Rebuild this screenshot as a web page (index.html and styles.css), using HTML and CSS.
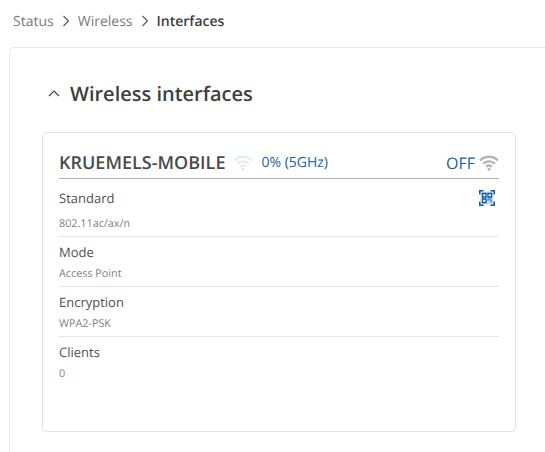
FILE: index.html
```html
<!DOCTYPE html>
<html lang="en">
<head>
    <meta charset="UTF-8">
    <meta name="viewport" content="width=device-width, initial-scale=1.0">
    <title>Wireless Interfaces</title>
    <link rel="stylesheet" href="styles.css">
</head>
<body>

    <!-- Breadcrumb -->
    <nav class="breadcrumb">
        <span class="crumb">Status</span>
        <svg class="crumb-sep" viewBox="0 0 8 12"><path d="M1.5 1 L6.5 6 L1.5 11"/></svg>
        <span class="crumb">Wireless</span>
        <svg class="crumb-sep" viewBox="0 0 8 12"><path d="M1.5 1 L6.5 6 L1.5 11"/></svg>
        <span class="crumb current">Interfaces</span>
    </nav>

    <!-- Main panel -->
    <section class="panel">
        <div class="panel-title">
            <svg class="collapse-icon" viewBox="0 0 12 7"><path d="M1 6 L6 1 L11 6"/></svg>
            <h2>Wireless interfaces</h2>
        </div>

        <div class="card">
            <div class="card-head">
                <span class="ssid">KRUEMELS-MOBILE</span>
                <svg class="wifi wifi-signal" viewBox="0 0 20 16">
                    <path d="M1 5.5 C6 0.5 14 0.5 19 5.5"/>
                    <path d="M4.2 8.7 C7.5 5.6 12.5 5.6 15.8 8.7"/>
                    <path d="M7.2 11.6 C8.9 10.2 11.1 10.2 12.8 11.6"/>
                    <circle cx="10" cy="14.2" r="1.5"/>
                </svg>
                <span class="signal">0% (5GHz)</span>
                <span class="state">OFF</span>
                <svg class="wifi wifi-state" viewBox="0 0 20 16">
                    <path d="M1 5.5 C6 0.5 14 0.5 19 5.5"/>
                    <path d="M4.2 8.7 C7.5 5.6 12.5 5.6 15.8 8.7"/>
                    <path d="M7.2 11.6 C8.9 10.2 11.1 10.2 12.8 11.6"/>
                    <circle cx="10" cy="14.2" r="1.5"/>
                </svg>
            </div>

            <div class="row row-first">
                <div>
                    <div class="label">Standard</div>
                    <div class="value value-gap">802.11ac/ax/n</div>
                </div>
                <svg class="qr" viewBox="0 0 16 16">
                    <rect class="qr-back" x="1.5" y="1.5" width="13" height="13"/>
                    <path class="qr-frame" d="M0.75 4.5 V0.75 H4.5 M11.5 0.75 H15.25 V4.5 M15.25 11.5 V15.25 H11.5 M4.5 15.25 H0.75 V11.5"/>
                    <path class="qr-cells" d="M3.5 3.5 H7 V7 H3.5 Z M9 3.5 H12.5 V7 H9 Z M3.5 9 H7 V12.5 H3.5 Z"/>
                    <path class="qr-bits" d="M9 9 H12.5 M9 9 V11 M11 11 H12.5 V12.5"/>
                </svg>
            </div>
            <div class="row">
                <div>
                    <div class="label">Mode</div>
                    <div class="value">Access Point</div>
                </div>
            </div>
            <div class="row">
                <div>
                    <div class="label">Encryption</div>
                    <div class="value">WPA2-PSK</div>
                </div>
            </div>
            <div class="row row-last">
                <div>
                    <div class="label">Clients</div>
                    <div class="value">0</div>
                </div>
            </div>
        </div>
    </section>

</body>
</html>
```

FILE: styles.css
```css
/* Reset */
* {
    margin: 0;
    padding: 0;
    box-sizing: border-box;
}

body {
    font-family: "Open Sans", "Liberation Sans", sans-serif;
    text-rendering: geometricPrecision;
    background-color: #fff;
    color: #404040;
    height: 452px;
    overflow: hidden;
}

/* Breadcrumb */
.breadcrumb {
    display: flex;
    align-items: center;
    height: 42px;
    padding-left: 13px;
    font-size: 14px;
    color: #7a7a7a;
}

.crumb-sep {
    width: 8px;
    height: 12px;
    margin: 0 7.5px 0 8.5px;
    fill: none;
    stroke: #555;
    stroke-width: 1.1;
}

.current {
    font-weight: 600;
    color: #404040;
}

/* Panel */
.panel {
    margin: 5px 0 0 9px;
    height: 405px;
    padding-left: 32px;
    border: 1.5px solid #e6e8ee;
    border-right: none;
    border-bottom: none;
    border-top-left-radius: 5px;
}

.panel-title {
    display: flex;
    align-items: center;
    height: 84px;
    padding: 6px 0 0 6px;
}

.collapse-icon {
    width: 12px;
    height: 7px;
    margin-right: 10px;
    fill: none;
    stroke: #404040;
    stroke-width: 1.1;
}

h2 {
    font-size: 20px;
    font-weight: 600;
    color: #404040;
}

/* Card */
.card {
    width: 474px;
    height: 300px;
    padding: 0 16px;
    border: 1px solid #e2e2e2;
    border-radius: 5px;
}

.card-head {
    display: flex;
    align-items: center;
    height: 46px;
    padding-top: 14px;
    border-bottom: 1px solid #b0b0b0;
}

.ssid {
    font-size: 18px;
    font-weight: 600;
    color: #4a4a4a;
}

.wifi {
    width: 20px;
    height: 16px;
    fill: none;
    stroke-width: 2.4;
}

.wifi-signal {
    margin: 0 8px 0 8px;
    stroke: #e3edf6;
}

.wifi-signal circle {
    fill: #e3edf6;
    stroke: none;
}

.wifi-state {
    margin-left: 4px;
    stroke: #b4b4b4;
}

.wifi-state circle {
    fill: #b4b4b4;
    stroke: none;
}

.signal {
    font-size: 14px;
    color: #1560a8;
}

.state {
    margin-left: auto;
    font-size: 16px;
    color: #1560a8;
}

/* Rows */
.row {
    display: flex;
    justify-content: space-between;
    height: 50px;
    padding-top: 6px;
    border-bottom: 1px solid #e4e4e4;
}

.row-first {
    height: 58px;
    padding-top: 10px;
}

.row-last {
    border-bottom: none;
}

.label {
    font-size: 13px;
    line-height: 18px;
    color: #505050;
}

.value {
    font-size: 10.8px;
    line-height: 14px;
    margin-top: 6px;
    color: #808080;
}

.value-gap {
    margin-top: 10px;
}

.qr {
    width: 16px;
    height: 16px;
    margin: 1px 4px 0 0;
    fill: none;
}

.qr-back {
    fill: #c9dbee;
}

.qr-frame {
    stroke: #0e5aa7;
    stroke-width: 1.5;
}

.qr-cells {
    stroke: #0e5aa7;
    stroke-width: 1.3;
    fill: #fff;
}

.qr-bits {
    stroke: #4f88c2;
    stroke-width: 1.3;
}
```
